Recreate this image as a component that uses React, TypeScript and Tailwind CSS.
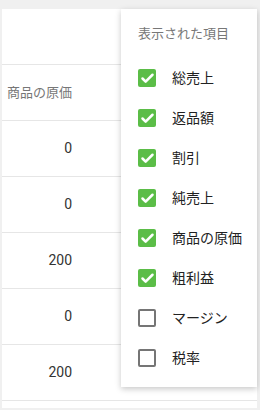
import { Check } from 'lucide-react';

const items = [
  { label: '総売上', checked: true },
  { label: '返品額', checked: true },
  { label: '割引', checked: true },
  { label: '純売上', checked: true },
  { label: '商品の原価', checked: true },
  { label: '粗利益', checked: true },
  { label: 'マージン', checked: false },
  { label: '税率', checked: false },
];

const values = ['0', '0', '200', '0', '200'];

export default function App() {
  return (
    <div
      className="relative w-[260px] h-[410px] overflow-hidden bg-[#f0f0f0] pt-[9px] pl-[2px] pr-[3px]"
      style={{ fontFamily: 'Roboto, "Noto Sans CJK JP", sans-serif' }}
    >
      <div className="bg-white h-[399px]">
        <div className="h-[56px] border-b border-[#e6e6e6]" />
        <div className="h-[56px] border-b border-[#e6e6e6] flex items-center pl-[5px] text-[13px] text-[#777]">
          商品の原価
        </div>
        {values.map((v, i) => (
          <div
            key={i}
            className="h-[56px] border-b border-[#e6e6e6] flex items-center"
          >
            <span className="w-[70px] text-right text-[14px] text-[#333]">{v}</span>
          </div>
        ))}
      </div>

      <div className="absolute left-[121px] top-[9px] w-[136px] h-[378px] bg-white shadow-[0_2px_6px_rgba(0,0,0,0.22)] pt-[15px] pl-[17px]">
        <div className="text-[13px] leading-[20px] text-[#777]">表示された項目</div>
        <div className="mt-[14px] flex flex-col">
          {items.map((item) => (
            <div key={item.label} className="h-[40px] flex items-center gap-[16px]">
              {item.checked ? (
                <span className="w-[18px] h-[18px] rounded-[2px] bg-[#5bbd47] flex items-center justify-center">
                  <Check className="w-[15px] h-[15px] text-white" strokeWidth={4} />
                </span>
              ) : (
                <span className="w-[18px] h-[18px] rounded-[2px] border-2 border-[#757575]" />
              )}
              <span className="text-[14px] text-[#222]">{item.label}</span>
            </div>
          ))}
        </div>
      </div>
    </div>
  );
}
